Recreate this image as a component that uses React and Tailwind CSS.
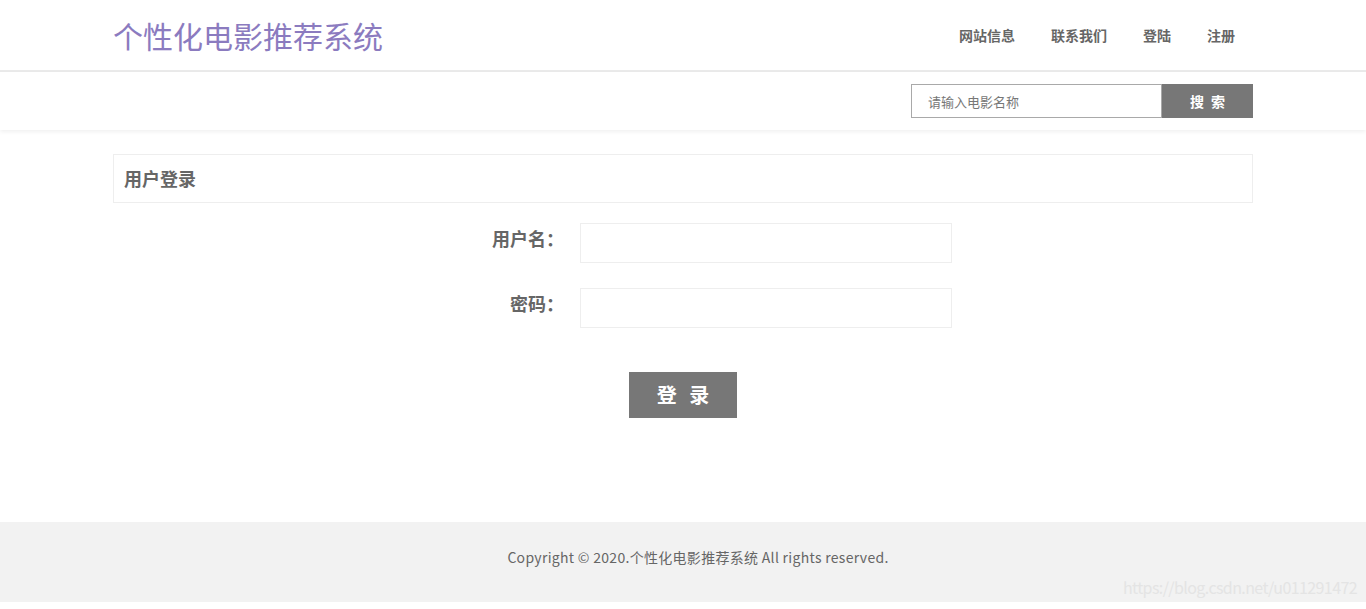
import React, { useState } from 'react';

const navItems = ['网站信息', '联系我们', '登陆', '注册'];

const App = () => {
    const [keyword, setKeyword] = useState('');
    const [username, setUsername] = useState('');
    const [password, setPassword] = useState('');

    return (
        <div className="min-h-[609px] bg-white text-[#666]" style={{ fontFamily: '"Noto Sans CJK SC", "Noto Sans", sans-serif' }}>
            {/* top bar */}
            <div className="h-[72px] border-b-2 border-[#eaeaea]">
                <div className="w-[1140px] mx-auto h-full flex items-center justify-between">
                    <h1 className="text-[30px] leading-none text-[#8b7bbf] font-normal">个性化电影推荐系统</h1>
                    <ul className="flex items-center">
                        {navItems.map((item) => (
                            <li key={item} className="px-[18px] text-[14px] font-bold text-[#666] cursor-pointer">{item}</li>
                        ))}
                    </ul>
                </div>
            </div>

            {/* search row */}
            <div className="h-[58px] shadow-[0_2px_4px_rgba(0,0,0,0.06)]">
                <div className="w-[1140px] mx-auto h-full flex items-center justify-end">
                    <input
                        type="text"
                        value={keyword}
                        onChange={(e) => setKeyword(e.target.value)}
                        placeholder="请输入电影名称"
                        className="w-[251px] h-[34px] border border-[#a9a9a9] px-4 text-[13px] outline-none placeholder:text-[#777]"
                    />
                    <button className="w-[91px] h-[34px] bg-[#777] text-white text-[14px] font-bold tracking-[2px] pl-[2px]">搜 索</button>
                </div>
            </div>

            {/* login panel */}
            <div className="w-[1140px] mx-auto mt-[24px]">
                <div className="h-[49px] border border-[#eee] flex items-center px-[10px]">
                    <h2 className="text-[18px] font-bold text-[#666]">用户登录</h2>
                </div>

                <form onSubmit={(e) => e.preventDefault()} className="pt-[20px] pb-[104px]">
                    <div className="flex ml-[347px]">
                        <label className="w-[120px] text-right text-[18px] font-bold leading-[30px] pr-[16px]">用户名：</label>
                        <input
                            type="text"
                            value={username}
                            onChange={(e) => setUsername(e.target.value)}
                            className="w-[372px] h-[40px] border border-[#eee] px-3 outline-none"
                        />
                    </div>
                    <div className="flex ml-[347px] mt-[25px]">
                        <label className="w-[120px] text-right text-[18px] font-bold leading-[30px] pr-[16px]">密码：</label>
                        <input
                            type="password"
                            value={password}
                            onChange={(e) => setPassword(e.target.value)}
                            className="w-[372px] h-[40px] border border-[#eee] px-3 outline-none"
                        />
                    </div>
                    <div className="flex justify-center mt-[44px]">
                        <button type="submit" className="w-[108px] h-[46px] bg-[#777] text-white text-[20px] font-bold tracking-[4px] pl-[4px]">登 录</button>
                    </div>
                </form>
            </div>

            {/* footer */}
            <div className="relative h-[80px] bg-[#f2f2f2] flex items-center justify-center">
                <p className="text-[14px] text-[#666] -mt-[10px] pl-[30px] tracking-[0.3px]">Copyright © 2020.个性化电影推荐系统 All rights reserved.</p>
                <span className="absolute right-[9px] bottom-[3px] text-[16px] tracking-[-0.6px] text-[#e4e4e4]">https://blog.csdn.net/u011291472</span>
            </div>
        </div>
    );
};

export default App;
